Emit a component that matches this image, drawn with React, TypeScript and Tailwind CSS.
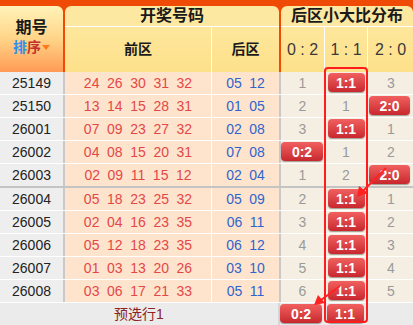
import React from "react";

type Cell = string | { badge: string };

interface Row {
    issue: string;
    front: string[];
    back: string[];
    ratio: [Cell, Cell, Cell];
    thick?: boolean;
}

const rows: Row[] = [
    { issue: "25149", front: ["24", "26", "30", "31", "32"], back: ["05", "12"], ratio: ["1", { badge: "1:1" }, "3"] },
    { issue: "25150", front: ["13", "14", "15", "28", "31"], back: ["01", "05"], ratio: ["2", "1", { badge: "2:0" }] },
    { issue: "26001", front: ["07", "09", "23", "27", "32"], back: ["02", "08"], ratio: ["3", { badge: "1:1" }, "1"] },
    { issue: "26002", front: ["04", "08", "15", "20", "31"], back: ["07", "08"], ratio: [{ badge: "0:2" }, "1", "2"] },
    { issue: "26003", front: ["02", "09", "11", "15", "12"], back: ["02", "04"], ratio: ["1", "2", { badge: "2:0" }], thick: true },
    { issue: "26004", front: ["05", "18", "23", "25", "32"], back: ["05", "09"], ratio: ["2", { badge: "1:1" }, "1"] },
    { issue: "26005", front: ["02", "04", "16", "23", "35"], back: ["06", "11"], ratio: ["3", { badge: "1:1" }, "2"] },
    { issue: "26006", front: ["05", "12", "18", "23", "35"], back: ["06", "12"], ratio: ["4", { badge: "1:1" }, "3"] },
    { issue: "26007", front: ["01", "03", "13", "20", "26"], back: ["03", "10"], ratio: ["5", { badge: "1:1" }, "4"] },
    { issue: "26008", front: ["03", "06", "17", "21", "33"], back: ["05", "11"], ratio: ["6", { badge: "1:1" }, "5"] },
];

const colW = ["w-[43px]", "w-[42px]", "w-[45px]"];
const badgeW = ["w-[42px]", "w-[37px]", "w-[41px]"];
const badgeJustify = ["justify-start", "justify-center", "justify-start"];

function Badge({ text, className }: { text: string; className: string }) {
    return (
        <div
            className={`${className} h-[19px] rounded-[4px] bg-gradient-to-b from-[#f15f5f] to-[#c8262d] shadow-[0_1px_1px_rgba(0,0,0,0.35)] flex items-center justify-center text-white font-bold text-[14px] leading-none`}
        >
            {text}
        </div>
    );
}

function RatioCell({ cell, i }: { cell: Cell; i: number }) {
    return (
        <div className={`${colW[i]} flex ${badgeJustify[i]} items-start pt-[1px] ${i === 2 ? "pl-[1px]" : ""}`}>
            {typeof cell === "string" ? (
                <div className="w-full h-[21px] flex items-center justify-center text-[14px] text-[#9a9a9a]">{cell}</div>
            ) : (
                <Badge text={cell.badge} className={badgeW[i]} />
            )}
        </div>
    );
}

export default function App() {
    return (
        <div className="relative w-[413px] h-[325px] overflow-hidden bg-[#ef4b06] pt-[6px] font-['Liberation_Sans','Noto_Sans_CJK_SC',sans-serif] text-[#222]">
            {/* header */}
            <div className="flex h-[66px]">
                <div className="w-[63px] rounded-tr-[6px] bg-gradient-to-b from-[#fff3b8] via-[#ffd488] to-[#ff9a55] flex flex-col items-center justify-center pb-[4px]">
                    <div className="text-[16px] font-bold leading-[20px] text-[#1a1a1a]">期号</div>
                    <div className="flex items-center text-[14px] font-bold leading-[18px]">
                        <span className="text-[#2f8ff0]">排</span>
                        <span className="text-[#c4312c]">序</span>
                        <span className="ml-[1px] w-0 h-0 border-l-[4px] border-r-[4px] border-t-[5px] border-l-transparent border-r-transparent border-t-[#ff7a18]" />
                    </div>
                </div>
                <div className="w-[2px]" />
                <div className="w-[214px] rounded-t-[6px] overflow-hidden flex flex-col">
                    <div className="h-[20px] bg-[#fde8a2] flex items-center justify-center text-[16px] font-bold text-[#1a1a1a]">开奖号码</div>
                    <div className="h-[1px] bg-white" />
                    <div className="flex-1 flex bg-gradient-to-b from-[#fee79c] to-[#fde08a] text-[14px] font-bold text-[#1a1a1a]">
                        <div className="w-[146px] flex items-center justify-center">前区</div>
                        <div className="w-[1px] bg-white" />
                        <div className="flex-1 flex items-center justify-center">后区</div>
                    </div>
                </div>
                <div className="w-[2px]" />
                <div className="flex-1 rounded-t-[6px] overflow-hidden flex flex-col">
                    <div className="h-[20px] bg-[#fde8a2] flex items-center justify-center text-[16px] font-bold text-[#1a1a1a]">后区小大比分布</div>
                    <div className="h-[1px] bg-white" />
                    <div className="flex-1 flex bg-gradient-to-b from-[#fee79c] to-[#fde08a] text-[16px] text-[#3a3a3a]">
                        <div className="w-[43px] flex items-center justify-center whitespace-pre">0 : 2</div>
                        <div className="w-[1px] bg-white" />
                        <div className="w-[42px] flex items-center justify-center whitespace-pre">1 : 1</div>
                        <div className="w-[1px] bg-white" />
                        <div className="flex-1 flex items-center justify-center whitespace-pre">2 : 0</div>
                    </div>
                </div>
            </div>

            {/* rows */}
            <div className="bg-[#c9c9c9]">
                {rows.map((r) => (
                    <div
                        key={r.issue}
                        className={`flex h-[23px] ${r.thick ? "border-b-2 border-[#c4c4c4] h-[24px]" : "border-b border-white"}`}
                    >
                        <div className="w-[63px] bg-[#eeeeee] flex items-center justify-center text-[14px] text-[#222]">{r.issue}</div>
                        <div className="w-[2px] bg-[#c9c9c9]" />
                        <div className="w-[146px] bg-[#ffe4cd] flex items-center justify-center gap-[7.6px] text-[14px] text-[#e34848]">
                            {r.front.map((n, i) => (
                                <span key={i}>{n}</span>
                            ))}
                        </div>
                        <div className="w-[1px] bg-white" />
                        <div className="w-[67px] bg-[#ffe4cd] flex items-center justify-center gap-[7.6px] text-[14px] text-[#3064cc]">
                            {r.back.map((n, i) => (
                                <span key={i}>{n}</span>
                            ))}
                        </div>
                        <div className="w-[2px] bg-[#c9c9c9]" />
                        <div className="flex bg-[#f5efe3]">
                            <RatioCell cell={r.ratio[0]} i={0} />
                            <div className="w-[1px] bg-white" />
                            <RatioCell cell={r.ratio[1]} i={1} />
                            <div className="w-[1px] bg-white" />
                            <RatioCell cell={r.ratio[2]} i={2} />
                        </div>
                    </div>
                ))}

                {/* footer */}
                <div className="flex h-[22px] bg-[#ebebeb]">
                    <div className="w-[278px] flex items-center justify-center text-[14px] text-[#8e2222]">预选行1</div>
                    <div className="w-[2px] bg-[#d6d6d6]" />
                    <div className="flex">
                        <RatioCell cell={{ badge: "0:2" }} i={0} />
                        <div className="w-[1px]" />
                        <RatioCell cell={{ badge: "1:1" }} i={1} />
                        <div className="w-[1px]" />
                        <div className="w-[45px]" />
                    </div>
                </div>
            </div>

            {/* highlight on the 1:1 column */}
            <div className="absolute left-[324px] top-[67px] w-[44px] h-[256px] border-2 border-[#ff1c1c] rounded-[4px] pointer-events-none" />

            {/* arrows */}
            <svg className="absolute inset-0 pointer-events-none" width="413" height="325" viewBox="0 0 413 325">
                <line x1="386" y1="168" x2="363" y2="191" stroke="#ff2222" strokeWidth="2" />
                <polygon points="357,197 359,186 368,193" fill="#ff2222" />
                <line x1="340" y1="286" x2="321" y2="300" stroke="#ff2222" strokeWidth="2" />
                <polygon points="314,305 318,295 325,303" fill="#ff2222" />
            </svg>
        </div>
    );
}
